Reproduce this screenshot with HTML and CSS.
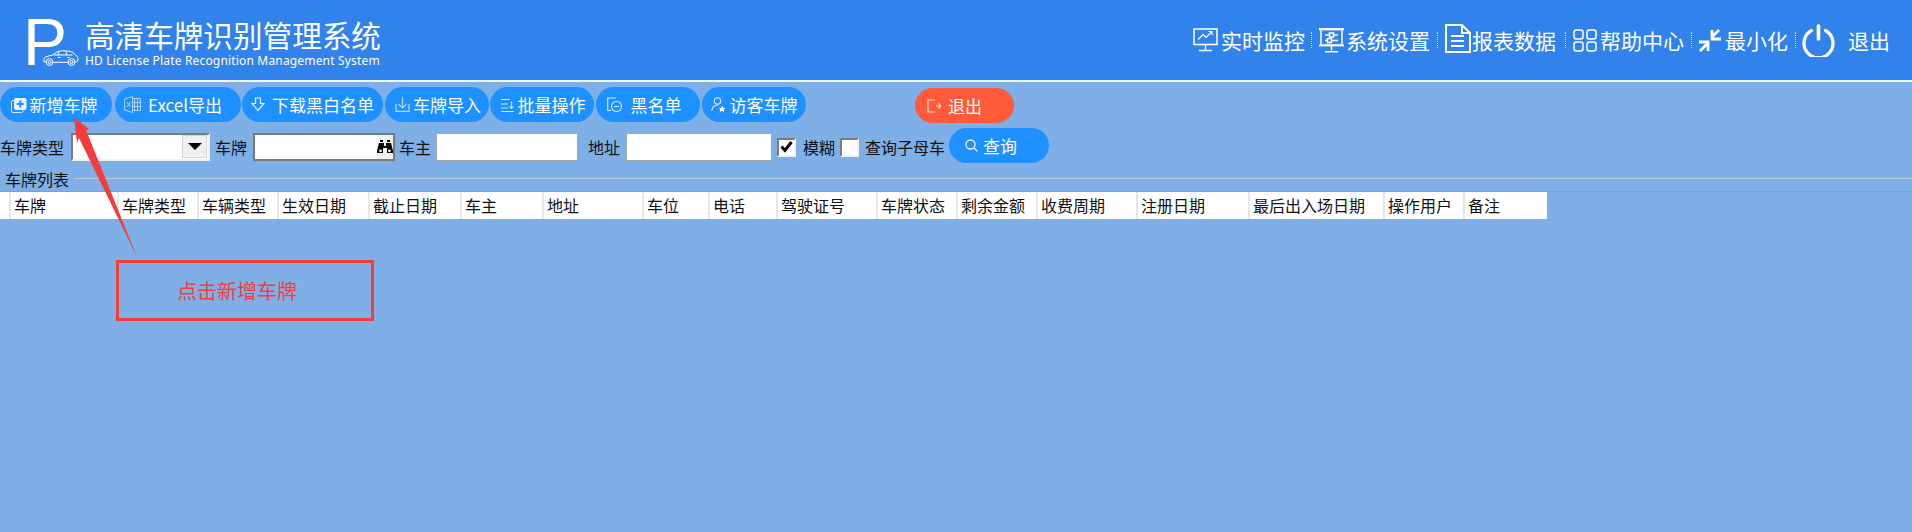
FILE: index.html
```html
<!DOCTYPE html>
<html lang="zh-CN">
<head>
<meta charset="utf-8">
<title>高清车牌识别管理系统</title>
<link rel="stylesheet" href="styles.css">
</head>
<body>
<header class="topbar">
  <div class="brand">
    <div class="logo">
      <span class="logo-p">P</span>
      <svg class="logo-car" viewBox="0 0 36 16" fill="none" stroke="#fff" stroke-width="1">
        <path d="M3 12H1.2C.6 10 .8 8 2.5 7 5 6 7.500 5.500 10 5 12.500 2.500 15 1 19 .8c4-.2 8 .2 11 1.800l3 2.800c1.500 1 2.200 2.500 2 4.400-.1 1-.6 1.700-1.500 2H31M26 12.300H10"/>
        <path d="M11 5h18.500M16 1.500 15 5M23 1 23.500 5M15 7.500h2.500M24 7.500h2.500"/>
        <circle cx="6.500" cy="12" r="3.400"/><circle cx="6.500" cy="12" r="1.500"/>
        <circle cx="28.500" cy="12" r="3.400"/><circle cx="28.500" cy="12" r="1.500"/>
      </svg>
    </div>
    <div class="brand-text">
      <div class="brand-title">高清车牌识别管理系统</div>
      <div class="brand-sub">HD License Plate Recognition Management System</div>
    </div>
  </div>
  <nav class="nav">
    <a class="nav-item">
      <svg class="nav-icon" width="25" height="24" viewBox="0 0 25 24" fill="none" stroke="#fff" stroke-width="1.500"><rect x="1" y="1" width="23" height="15.500"/><path d="M5 11.500l5-5 3 3 6-6M15.500 3.500H19V7" stroke-width="1.200"/><path d="M12.500 16.500v5M6 22.500h13"/></svg>
      <span>实时监控</span>
    </a>
    <i class="nav-sep nav-sep-near"></i>
    <a class="nav-item nav-item-tight">
      <svg class="nav-icon" width="25" height="25" viewBox="0 0 25 25" fill="none" stroke="#fff" stroke-width="1.500"><path d="M0 1.200h25" stroke-width="2.400"/><path d="M2 1.500v15.500h21V1.500"/><path d="M0 17.500h25" stroke-width="1.800"/><path d="M12.500 17.500v5M6 23.700h13"/><path d="M6 7h4M15 7h4M6 12.500h2M13 12.500h6"/><rect x="10.500" y="5" width="4" height="4"/><rect x="8.500" y="10.500" width="4" height="4"/></svg>
      <span>系统设置</span>
    </a>
    <i class="nav-sep"></i>
    <a class="nav-item nav-item-snug">
      <svg class="nav-icon nav-doc" width="26" height="29" viewBox="0 0 26 29" fill="none" stroke="#fff" stroke-width="2"><path d="M1 1h16l8 8v19H1z"/><path d="M17 1v8h8"/><path d="M6 12h13M6 17h13M6 22h13"/></svg>
      <span>报表数据</span>
    </a>
    <i class="nav-sep nav-sep-far"></i>
    <a class="nav-item">
      <svg class="nav-icon" width="24" height="23" viewBox="0 0 24 23" fill="none" stroke="#fff" stroke-width="1.500"><rect x="1" y="1" width="9" height="9" rx="2.500"/><rect x="14" y="1" width="9" height="9" rx="2.500"/><rect x="1" y="13" width="9" height="9" rx="2.500"/><rect x="14" y="13" width="9" height="9" rx="2.500"/></svg>
      <span>帮助中心</span>
    </a>
    <i class="nav-sep nav-sep-r5"></i>
    <a class="nav-item">
      <svg class="nav-icon" width="25" height="25" viewBox="0 0 25 25" fill="none" stroke="#fff" stroke-width="3"><path d="M22 2 15 9M15 2v9h9M3 23l7-7M2 14h9v9" stroke-width="2.800"/></svg>
      <span>最小化</span>
    </a>
    <i class="nav-sep nav-sep-r6"></i>
    <a class="nav-item nav-exit">
      <svg class="nav-icon" width="33" height="33" viewBox="0 0 33 33" fill="none" stroke="#fff" stroke-width="3.200" stroke-linecap="round"><path d="M9.500 6.500a14.500 14.500 0 1 0 14 0"/><path d="M16.500 2v13" stroke-width="3.600"/></svg>
      <span>退出</span>
    </a>
  </nav>
</header>

<main>
  <div class="toolbar">
    <button class="btn btn-add"><svg width="16" height="16" viewBox="0 0 16 16"><rect x=".5" y="3.500" width="11.500" height="12" rx="1.500" fill="none" stroke="#dcebff"/><rect x="3" y="1" width="12.500" height="12" rx="2" fill="#e8f2ff"/><path d="M9.300 3.500v7M5.800 7h7" stroke="#1e90ff" stroke-width="2"/></svg>新增车牌</button>
    <button class="btn btn-excel"><svg width="17" height="17" viewBox="0 0 17 17" fill="none" stroke="#a9d2fb"><path d="M.5 3l8-2.500v16l-8-2.500z"/><path d="M8.500 2.500h8v12h-8M10.500 2.500v12M13.500 2.500v12M8.500 6.500h8M8.500 10.500h8M3 6l3.500 5M6.500 6 3 11"/></svg>Excel导出</button>
    <button class="btn btn-down"><svg width="14" height="15" viewBox="0 0 14 15" fill="none" stroke="#e4f1ff" stroke-width="1.200"><path d="M4.500 1h5v5.500H13L7 13.500 1 6.500h3.500z"/></svg>下载黑白名单</button>
    <button class="btn btn-import"><svg width="15" height="15" viewBox="0 0 15 15" fill="none" stroke="#b5d8fc" stroke-width="1.200"><path d="M1 7v7.300h13V7M7.500 .5v10M3.500 7l4 4 4-4"/></svg>车牌导入</button>
    <button class="btn btn-batch"><svg width="14" height="14" viewBox="0 0 14 14" fill="none" stroke="#cfe5fd" stroke-width="1.200"><path d="M0 1.500h9M0 6h7M0 10h7M0 13.500h13M10.500 3.500v7M8.500 8.500l2 2 2-2"/></svg>批量操作</button>
    <button class="btn btn-black"><svg width="15" height="15" viewBox="0 0 15 15" fill="none" stroke="#d8eafe" stroke-width="1.100"><path d="M9 1H.7v12.500H4"/><circle cx="9.500" cy="9.500" r="5"/><path d="M7 9.500h5"/></svg>黑名单</button>
    <button class="btn btn-visitor"><svg width="15" height="15" viewBox="0 0 15 15" fill="none" stroke="#e6f2ff" stroke-width="1.100"><circle cx="6.500" cy="4" r="3.200"/><path d="M.8 14c.2-3.500 2-5.800 5.700-5.800"/><path d="M11 8.500l1.100 2.200 2.400.3-1.700 1.600.4 2.300-2.200-1.100-2.200 1.100.4-2.300L8 11l2.400-.3z" fill="#fff" stroke="none"/></svg>访客车牌</button>
    <button class="btn btn-danger"><svg width="14" height="14" viewBox="0 0 14 14" fill="none" stroke="#ffd9cf" stroke-width="1.200"><path d="M8 1H1v12h7M9 7h5M11.500 4.500 14 7l-2.500 2.500"/></svg>退出</button>
  </div>

  <div class="filter">
    <div class="fields">
      <label class="lbl lbl-type">车牌类型</label>
      <div class="select"><span class="select-btn"><i class="caret"></i></span></div>
      <label class="lbl lbl-plate">车牌</label>
      <div class="lookup"><span class="lookup-btn"><svg width="16" height="14" viewBox="0 0 16 14" fill="#000"><path d="M3 0h3v2H3zM10 0h3v2h-3zM2 3h5v3h2V3h5l2 8v2H10V8H6v5H0v-2z"/><circle cx="3.500" cy="10.800" r="1.400" fill="#fff"/><circle cx="12.500" cy="10.800" r="1.400" fill="#fff"/></svg></span></div>
      <label class="lbl lbl-owner">车主</label>
      <input class="input input-owner" type="text">
      <label class="lbl lbl-addr">地址</label>
      <input class="input input-addr" type="text">
      <span class="check"><svg width="13" height="12" viewBox="0 0 13 12" fill="none" stroke="#000" stroke-width="3"><path d="M1.500 5.500 5 9.500 11.500 1"/></svg></span>
      <label class="lbl lbl-fuzzy">模糊</label>
      <span class="check check-off"></span>
      <label class="lbl lbl-sub">查询子母车</label>
    </div>
    <button class="btn btn-query"><svg width="13" height="13" viewBox="0 0 13 13" fill="none" stroke="#f0f7ff" stroke-width="1.300"><circle cx="5.500" cy="5.500" r="4.500"/><path d="M9 9l3.500 3.500"/></svg>查询</button>
  </div>

  <div class="section-title"><span>车牌列表</span></div>

  <div class="grid-wrap">
    <div class="grid">
      <div class="cell"></div>
      <div class="cell">车牌</div>
      <div class="cell">车牌类型</div>
      <div class="cell">车辆类型</div>
      <div class="cell">生效日期</div>
      <div class="cell">截止日期</div>
      <div class="cell">车主</div>
      <div class="cell">地址</div>
      <div class="cell">车位</div>
      <div class="cell">电话</div>
      <div class="cell">驾驶证号</div>
      <div class="cell">车牌状态</div>
      <div class="cell">剩余金额</div>
      <div class="cell">收费周期</div>
      <div class="cell">注册日期</div>
      <div class="cell">最后出入场日期</div>
      <div class="cell">操作用户</div>
      <div class="cell">备注</div>
    </div>
  </div>
</main>

<svg class="arrow" width="1912" height="532" viewBox="0 0 1912 532"><polygon points="74,117 89,129 86,130 137,257 79,138 77,143" fill="#f43c3c"/></svg>
<div class="callout">点击新增车牌</div>
</body>
</html>
```

FILE: styles.css
```css
* { box-sizing: border-box; }
html, body { margin: 0; padding: 0; }
body {
  position: relative;
  width: 1912px;
  height: 532px;
  overflow: hidden;
  background: #7eafe6;
  color: #111;
  font-family: "Noto Sans CJK SC", "Noto Sans", sans-serif;
  font-size: 16px;
}

/* top bar */
.topbar {
  display: flex;
  justify-content: space-between;
  height: 82px;
  background: #3282ec;
  border-bottom: 2px solid #f2f6fd;
  color: #fff;
}
.brand { display: flex; padding-left: 23px; }
.logo { position: relative; width: 62px; height: 80px; }
.logo-p {
  display: block;
  padding-top: 2px;
  font-family: "Liberation Sans", sans-serif;
  font-size: 66px;
  line-height: 80px;
}
.logo-car { position: absolute; left: 20px; top: 50px; width: 36px; height: 16px; }
.brand-text { padding-top: 16px; }
.brand-title { font-size: 29.600px; line-height: 37px; white-space: nowrap; }
.brand-sub {
  font-family: "Noto Sans", sans-serif;
  font-size: 12px;
  line-height: 16px;
  letter-spacing: .17px;
  white-space: nowrap;
}
.nav { display: flex; align-items: center; padding-right: 22px; height: 80px; font-size: 21px; }
.nav-item { display: flex; align-items: center; gap: 3px; }
.nav-item-tight { gap: 2px; }
.nav-item-snug { gap: 1px; }
.nav-exit { gap: 13px; }
.nav-sep { width: 1px; height: 16px; margin: 0 7px; border-left: 1px dotted #cfe0f8; }
.nav-sep-near { margin-left: 6px; }
.nav-sep-far { margin-left: 9px; }
.nav-sep-r5 { margin-right: 5px; }
.nav-sep-r6 { margin-right: 6px; }
.nav-icon { display: block; flex: none; }
.nav-doc { margin-top: -3px; }

/* toolbar */
.toolbar { display: flex; padding-top: 5px; height: 40px; }
.btn {
  display: flex;
  align-items: center;
  justify-content: center;
  height: 35px;
  padding: 0;
  border: 0;
  border-radius: 18px;
  background: #1e90ff;
  color: #fff;
  font-family: "Noto Sans CJK SC", sans-serif;
  font-size: 17px;
  white-space: nowrap;
}
.btn svg { flex: none; }
.btn-add { width: 112px; gap: 3px; padding-right: 4px; }
.btn-excel { width: 126px; gap: 7px; margin-left: 3px; padding-right: 10px; }
.btn-down { width: 141px; gap: 7px; margin-left: 1px; }
.btn-import { width: 104px; gap: 3px; margin-left: 2px; padding-left: 2px; }
.btn-batch { width: 104px; gap: 3px; margin-left: 1px; padding-left: 2px; }
.btn-black { width: 104px; gap: 9px; margin-left: 2px; padding-right: 8px; }
.btn-visitor { width: 104px; gap: 4px; margin-left: 2px; }
.btn-danger { width: 99px; gap: 7px; margin: 1px 0 0 109px; padding-right: 20px; background: #ff5a3a; }
.btn-query { width: 100px; gap: 5px; margin-left: 4px; padding-right: 16px; }

/* filter */
.filter { display: flex; align-items: flex-start; height: 35px; margin-top: 6px; }
.fields { display: flex; align-items: center; height: 28px; margin-top: 5px; }
.lbl { white-space: nowrap; line-height: 28px; }
.input, .select, .lookup { height: 28px; background: #fff; }
.select {
  position: relative;
  width: 139px;
  margin-left: 9px;
  border: 2px solid;
  border-color: #7b7b7b #f1f1f1 #f1f1f1 #7b7b7b;
}
.select-btn {
  position: absolute;
  top: 0; right: 1px; bottom: 1px;
  width: 25px;
  display: flex;
  align-items: center;
  justify-content: center;
  background: #f0f0f0;
  border: 1px solid #d6d6d6;
}
.caret { width: 0; height: 0; border: 7px solid transparent; border-top: 7px solid #000; border-bottom: 0; }
.lbl-type { width: 62px; }
.lbl-plate { margin-left: 5px; }
.lookup {
  position: relative;
  width: 142px;
  margin-left: 6px;
  border: 2px solid #7b7b7b;
}
.lookup-btn {
  position: absolute;
  top: 0; right: 0; bottom: 0;
  width: 16px;
  display: flex;
  align-items: center;
  justify-content: center;
  background: #f0f0f0;
}
.lbl-owner { margin-left: 4px; }
.input { display: block; padding: 0; border: 1.500px solid #a9a9a9; outline: 0; }
.input-owner { width: 142px; margin-left: 5px; }
.lbl-addr { margin-left: 10px; }
.input-addr { width: 146px; margin-left: 6px; }
.check {
  display: flex;
  align-items: center;
  justify-content: center;
  width: 19px;
  height: 19px;
  margin: 0 0 0 5px;
  background: #fff;
  border: 2px solid;
  border-color: #7b7b7b #f1f1f1 #f1f1f1 #7b7b7b;
}
.lbl-fuzzy { margin-left: 7px; }
.check-off { margin-left: 5px; }
.lbl-sub { margin-left: 6px; }

/* section */
.section-title {
  display: flex;
  align-items: center;
  gap: 5px;
  height: 24px;
  margin-top: 3px;
  padding-left: 5px;
  line-height: 24px;
}
.section-title span { padding-top: 1px; }
.section-title::after { content: ""; flex: 1; height: 1px; background: #bcc7d3; }

/* table header */
.grid-wrap { margin-top: 1px; border-top: 1px solid #8c9db3; }
.grid {
  display: grid;
  grid-template-columns: 11px 108px 80px 80px 91px 92px 82px 100px 66px 68px 100px 80px 80px 100px 112px 135px 80px 82px;
  width: 1547px;
  height: 27px;
  background: #fff;
}
.cell {
  padding-left: 3px;
  border-right: 2px solid #e6e6e6;
  line-height: 26px;
  white-space: nowrap;
  overflow: hidden;
}
.cell:last-child { border-right: 0; }

/* annotation */
.arrow { position: absolute; left: 0; top: 0; pointer-events: none; }
.callout {
  position: absolute;
  left: 116px;
  top: 260px;
  display: flex;
  align-items: center;
  justify-content: center;
  width: 258px;
  height: 61px;
  padding-right: 16px;
  border: 3px solid #f43c3c;
  color: #f43c3c;
  font-size: 20px;
}
```
